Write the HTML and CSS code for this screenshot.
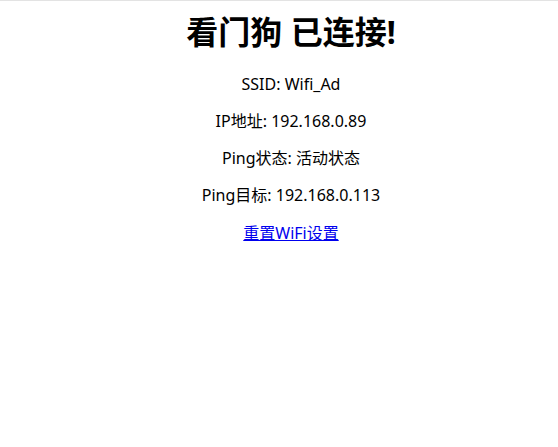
FILE: index.html
```html
<!DOCTYPE html>
<html lang="zh">
<head>
    <meta charset="UTF-8">
    <meta name="viewport" content="width=device-width, initial-scale=1.0">
    <title>看门狗</title>
    <link rel="stylesheet" href="styles.css">
</head>
<body>
<div class="container">
    <h1>看门狗 已连接!</h1>
    <p>SSID: Wifi_Ad</p>
    <p>IP地址: 192.168.0.89</p>
    <p>Ping状态: 活动状态</p>
    <p>Ping目标: 192.168.0.113</p>
    <a href="#">重置WiFi设置</a>
</div>
</body>
</html>
```

FILE: styles.css
```css
html, body {
    margin: 0;
    padding: 0;
    background-color: white;
}
body {
    font-family: "Noto Sans", "Noto Sans CJK SC", sans-serif;
    color: black;
    border-top: 1px solid #e3e3e3;
}
.container {
    text-align: center;
    padding-left: 24px;
}
h1 {
    font-size: 32px;
    line-height: 44px;
    margin: 9px 0 20px;
}
p {
    font-size: 16px;
    line-height: 21px;
    margin: 0 0 16px;
}
a {
    font-size: 16px;
    line-height: 21px;
    color: #0000ee;
}
```
